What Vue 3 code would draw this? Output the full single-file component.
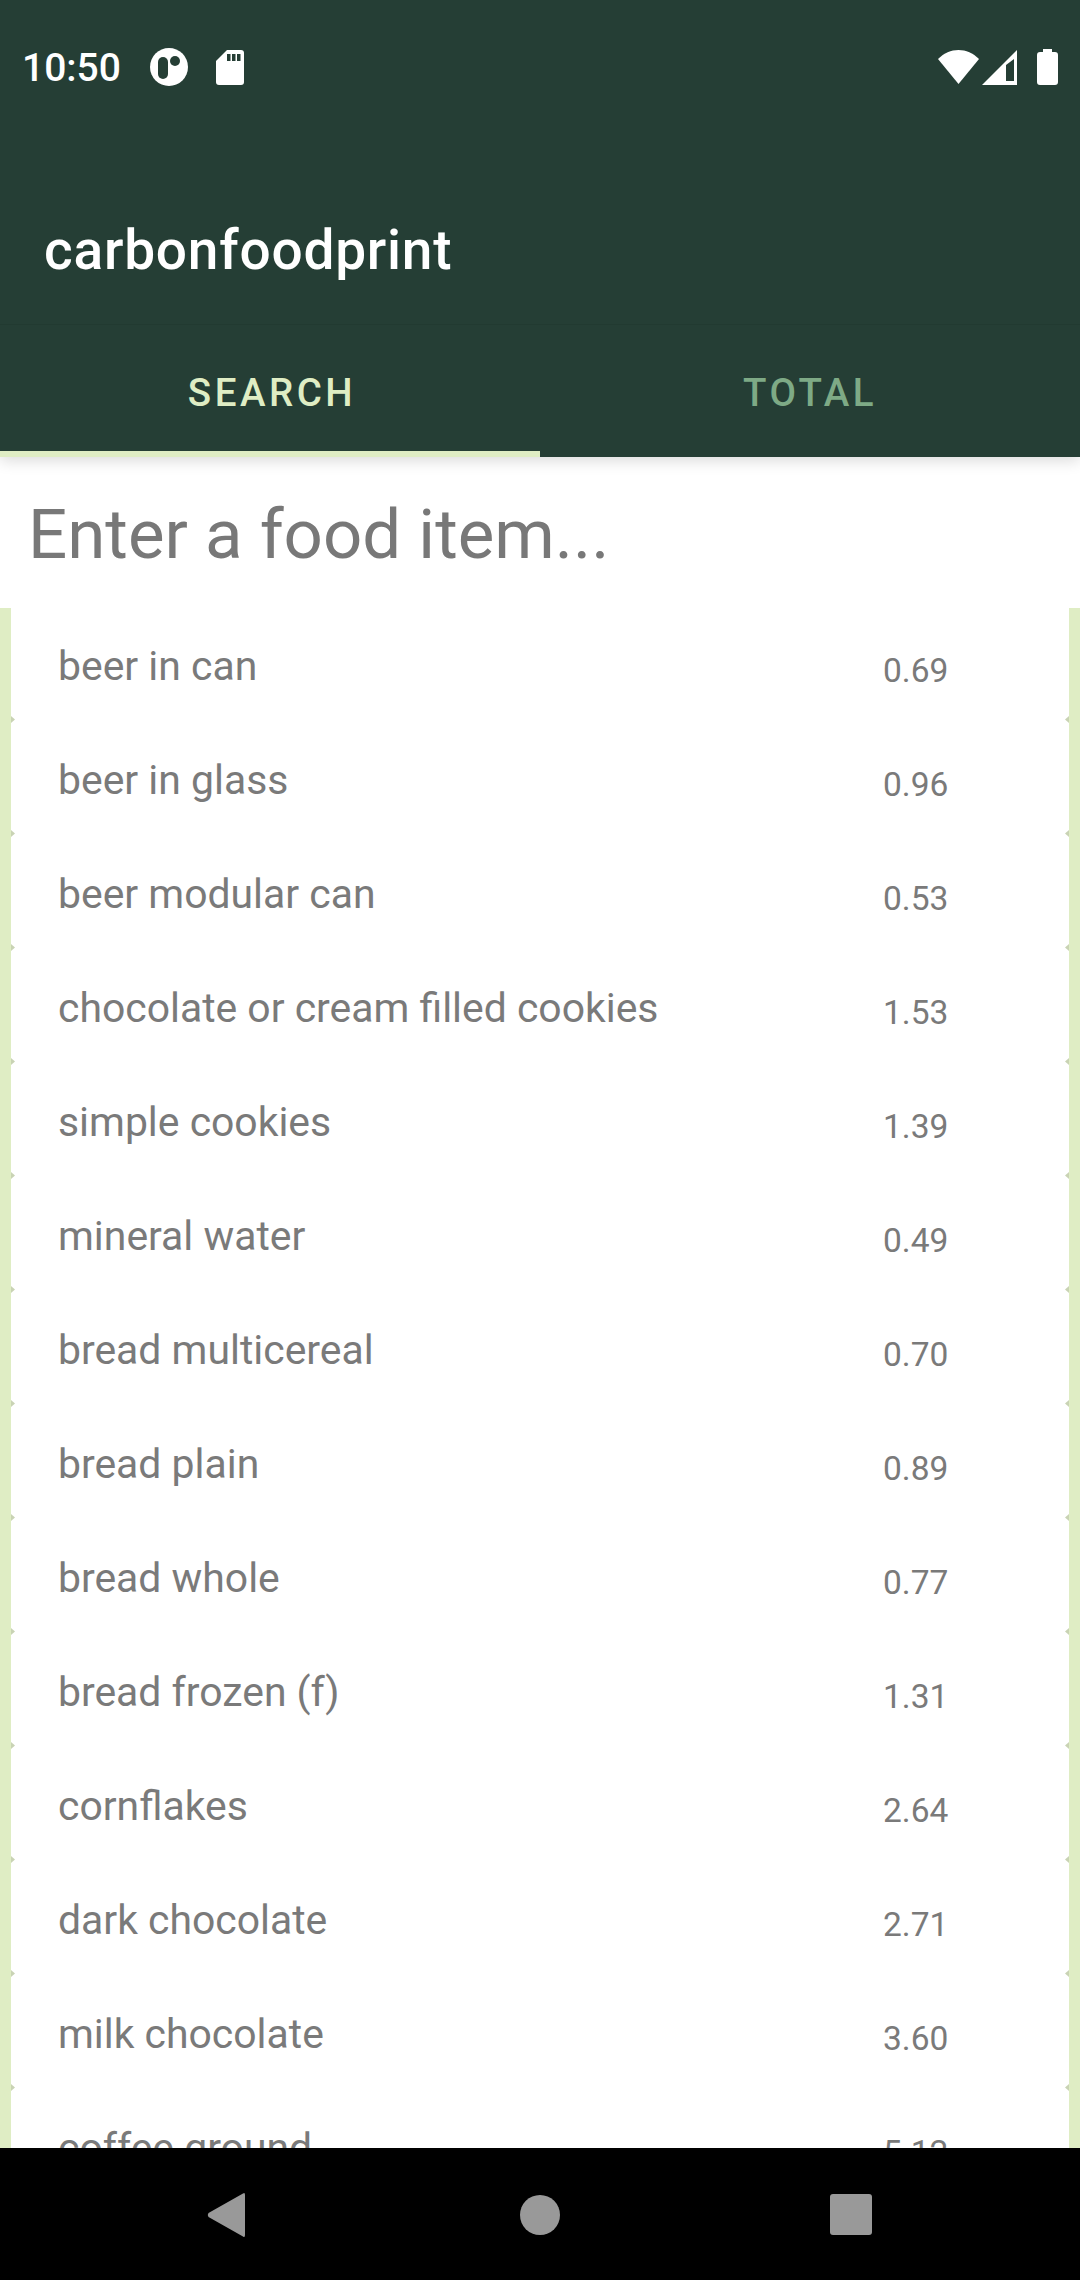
<script setup>
const foods = [
  ['beer in can', '0.69'],
  ['beer in glass', '0.96'],
  ['beer modular can', '0.53'],
  ['chocolate or cream filled cookies', '1.53'],
  ['simple cookies', '1.39'],
  ['mineral water', '0.49'],
  ['bread multicereal', '0.70'],
  ['bread plain', '0.89'],
  ['bread whole', '0.77'],
  ['bread frozen (f)', '1.31'],
  ['cornflakes', '2.64'],
  ['dark chocolate', '2.71'],
  ['milk chocolate', '3.60'],
  ['coffee ground', '5.12'],
]
</script>

<template>
  <div class="screen">
    <header class="header">
      <div class="status">
        <span class="time">10:50</span>
        <svg class="ic-circle" width="38" height="38" viewBox="0 0 38 38">
          <circle cx="19" cy="19" r="19" fill="#fff" />
          <rect x="8" y="9" width="10" height="22" rx="5" fill="#253e35" />
          <circle cx="25" cy="13" r="5" fill="#253e35" />
        </svg>
        <svg class="ic-sd" width="28" height="35" viewBox="0 0 28 35">
          <path d="M11 0H25a3 3 0 0 1 3 3V32a3 3 0 0 1-3 3H3a3 3 0 0 1-3-3V11Z" fill="#fff" />
          <rect x="11" y="4" width="3.500" height="7" fill="#253e35" />
          <rect x="16" y="4" width="3.500" height="7" fill="#253e35" />
          <rect x="21" y="4" width="3.500" height="7" fill="#253e35" />
        </svg>
        <span class="spacer"></span>
        <svg class="ic-wifi" width="41" height="34" viewBox="0 0 41 34">
          <path d="M0 9C6 3 13 0 20.500 0S35 3 41 9L20.500 34Z" fill="#fff" />
        </svg>
        <svg class="ic-signal" width="35" height="35" viewBox="0 0 35 35">
          <path fill-rule="evenodd" d="M35 0V35H0ZM24 31H32V9L24 15Z" fill="#fff" />
        </svg>
        <svg class="ic-batt" width="21" height="36" viewBox="0 0 21 36">
          <path d="M6 0H15V3H18a3 3 0 0 1 3 3V33a3 3 0 0 1-3 3H3a3 3 0 0 1-3-3V6a3 3 0 0 1 3-3H6Z" fill="#fff" />
        </svg>
      </div>
      <div class="toolbar">carbonfoodprint</div>
      <nav class="tabs">
        <div class="tab active">SEARCH</div>
        <div class="tab">TOTAL</div>
      </nav>
    </header>

    <div class="search">Enter a food item...</div>

    <main class="list">
      <div v-for="f in foods" :key="f[0]" class="row">
        <span class="name">{{ f[0] }}</span>
        <span class="value">{{ f[1] }}</span>
      </div>
    </main>

    <footer class="navbar">
      <svg width="38" height="46" viewBox="0 0 38 46">
        <path d="M36 1.500Q38 0 38 3V43Q38 46 36 44.500L1.500 25Q0 23 1.500 21Z" fill="#999" />
      </svg>
      <span class="home"></span>
      <span class="recent"></span>
    </footer>
  </div>
</template>

<style>
body { margin: 0; background: #fff; }
</style>

<style scoped>
.screen {
  width: 1080px;
  height: 2280px;
  display: flex;
  flex-direction: column;
  overflow: hidden;
  font-family: Roboto, "Liberation Sans", sans-serif;
  background: #fff;
}
.header {
  background: #253e35;
  color: #fff;
  box-shadow: 0 4px 14px rgba(0, 0, 0, 0.14);
  position: relative;
  z-index: 1;
}
.status {
  height: 136px;
  box-sizing: border-box;
  padding: 49px 22px 0 22px;
  display: flex;
  align-items: flex-start;
}
.time {
  font-size: 39px;
  line-height: 38px;
  font-weight: 500;
  width: 128px;
}
.ic-circle { margin-top: -1px; }
.ic-sd { margin: 1px 0 0 28px; }
.spacer { flex: 1; }
.ic-wifi { margin-top: 1px; }
.ic-signal { margin: 1px 0 0 3px; }
.ic-batt { margin: 0 0 0 20px; }
.toolbar {
  height: 189px;
  box-sizing: border-box;
  padding: 82px 0 0 44px;
  font-size: 55px;
  line-height: 64px;
  font-weight: 500;
  letter-spacing: 0.780px;
  border-bottom: 1px solid #223a31;
}
.tabs {
  display: flex;
  height: 132px;
}
.tab {
  flex: 0 0 50%;
  box-sizing: border-box;
  display: flex;
  align-items: center;
  justify-content: center;
  padding-top: 2px;
  font-size: 38.500px;
  font-weight: 500;
  letter-spacing: 3.500px;
  color: #7eaa86;
}
.tab.active {
  color: #dfedc4;
  border-bottom: 6px solid #dfedc4;
  padding: 8px 0 0 4px;
}
.search {
  height: 151px;
  box-sizing: border-box;
  padding: 39px 0 0 28px;
  font-size: 69px;
  line-height: 77px;
  color: #787878;
  background: #fff;
}
.list {
  flex: 1;
  min-height: 0;
  overflow: hidden;
  background: #dfedc4;
  padding: 0 11px;
}
.row {
  height: 114px;
  background: #fff;
  display: flex;
  align-items: flex-start;
  color: #7a7a7a;
  position: relative;
}
.row:first-child { margin-top: -2px; }
.row::before,
.row::after {
  content: "";
  position: absolute;
  bottom: -3px;
  width: 4px;
  height: 7px;
  background: #c9d3b4;
  z-index: 1;
}
.row::before {
  left: 0;
  clip-path: polygon(0 0, 100% 50%, 0 100%);
}
.row::after {
  right: 0;
  clip-path: polygon(100% 0, 0 50%, 100% 100%);
}
.name {
  width: 872px;
  padding-left: 47px;
  box-sizing: border-box;
  font-size: 40.900px;
  line-height: 58px;
  margin-top: 31px;
}
.value {
  font-size: 33.500px;
  line-height: 40px;
  margin-top: 45px;
}
.navbar {
  height: 132px;
  flex: none;
  background: #000;
  display: flex;
  align-items: flex-start;
  padding: 44px 0 0 207px;
  box-sizing: border-box;
}
.home {
  width: 40px;
  height: 40px;
  border-radius: 50%;
  background: #999;
  margin: 3px 0 0 275px;
}
.recent {
  width: 42px;
  height: 41px;
  border-radius: 3px;
  background: #999;
  margin: 2px 0 0 270px;
}
</style>
